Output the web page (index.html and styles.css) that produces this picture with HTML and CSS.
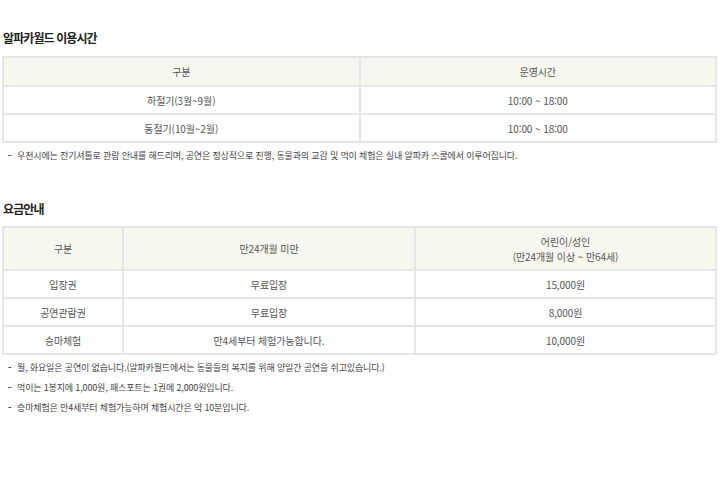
FILE: index.html
```html
<!DOCTYPE html>
<html lang="ko">
<head>
<meta charset="utf-8">
<title>알파카월드 이용안내</title>
<link rel="stylesheet" href="styles.css">
</head>
<body>
<div class="wrap">
  <section class="sec">
    <h3 class="tit">알파카월드 이용시간</h3>
    <table class="tbl tbl-time">
      <thead>
        <tr><th>구분</th><th>운영시간</th></tr>
      </thead>
      <tbody>
        <tr><td>하절기(3월~9월)</td><td>10:00 ~ 18:00</td></tr>
        <tr><td>동절기(10월~2월)</td><td>10:00 ~ 18:00</td></tr>
      </tbody>
    </table>
    <ul class="notes">
      <li>우천시에는 전기셔틀로 관람 안내를 해드리며, 공연은 정상적으로 진행, 동물과의 교감 및 먹이 체험은 실내 알파카 스쿨에서 이루어집니다.</li>
    </ul>
  </section>
  <section class="sec sec-fee">
    <h3 class="tit">요금안내</h3>
    <table class="tbl tbl-fee">
      <colgroup>
        <col class="c1"><col class="c2"><col class="c3">
      </colgroup>
      <thead>
        <tr><th>구분</th><th>만24개월 미만</th><th>어린이/성인<br>(만24개월 이상 ~ 만64세)</th></tr>
      </thead>
      <tbody>
        <tr><td>입장권</td><td>무료입장</td><td>15,000원</td></tr>
        <tr><td>공연관람권</td><td>무료입장</td><td>8,000원</td></tr>
        <tr><td>승마체험</td><td>만4세부터 체험가능합니다.</td><td>10,000원</td></tr>
      </tbody>
    </table>
    <ul class="notes">
      <li>월, 화요일은 공연이 없습니다.(알파카월드에서는 동물들의 복지를 위해 양일간 공연을 쉬고있습니다.)</li>
      <li>먹이는 1봉지에 1,000원, 패스포트는 1권에 2,000원입니다.</li>
      <li>승마체험은 만4세부터 체험가능하며 체험시간은 약 10분입니다.</li>
    </ul>
  </section>
</div>
</body>
</html>
```

FILE: styles.css
```css
html, body {
  margin: 0;
  padding: 0;
  background: #fff;
}
body {
  font-family: "Noto Sans CJK KR", "Noto Sans", sans-serif;
  color: #555;
  font-size: 10px;
}
.wrap {
  padding: 30px 3px 0 2px;
}
.tit {
  margin: 0 0 10px;
  font-size: 12px;
  font-weight: 700;
  color: #222;
  line-height: 16px;
  letter-spacing: -0.9px;
  padding-left: 1px;
}
.tbl {
  width: 100%;
  border-collapse: collapse;
  table-layout: fixed;
  border: 2px solid #e6e6e6;
}
.tbl th, .tbl td {
  border: 2px solid #e6e6e6;
  text-align: center;
  font-weight: 400;
  font-size: 10px;
  color: #555;
  line-height: 15px;
  padding: 0;
  letter-spacing: -0.1px;
}
.tbl th {
  background: #f6f8ef;
}
.tbl-time th { height: 27px; }
.tbl-time td { height: 26px; }
.tbl-fee th { height: 41px; }
.tbl-fee td { height: 26px; }
.c1 { width: 120px; }
.c2 { width: 292px; }
.notes {
  list-style: none;
  margin: 3px 0 0;
  padding: 0 0 0 6px;
  font-size: 9px;
  color: #444;
  letter-spacing: -0.15px;
}
.notes li {
  line-height: 20px;
}
.notes li::before {
  content: "-";
  display: inline-block;
  width: 9px;
  font-weight: 700;
  color: #333;
}
.sec-fee {
  margin-top: 35px;
}
.sec-fee .tit {
  margin-bottom: 9px;
}
```
